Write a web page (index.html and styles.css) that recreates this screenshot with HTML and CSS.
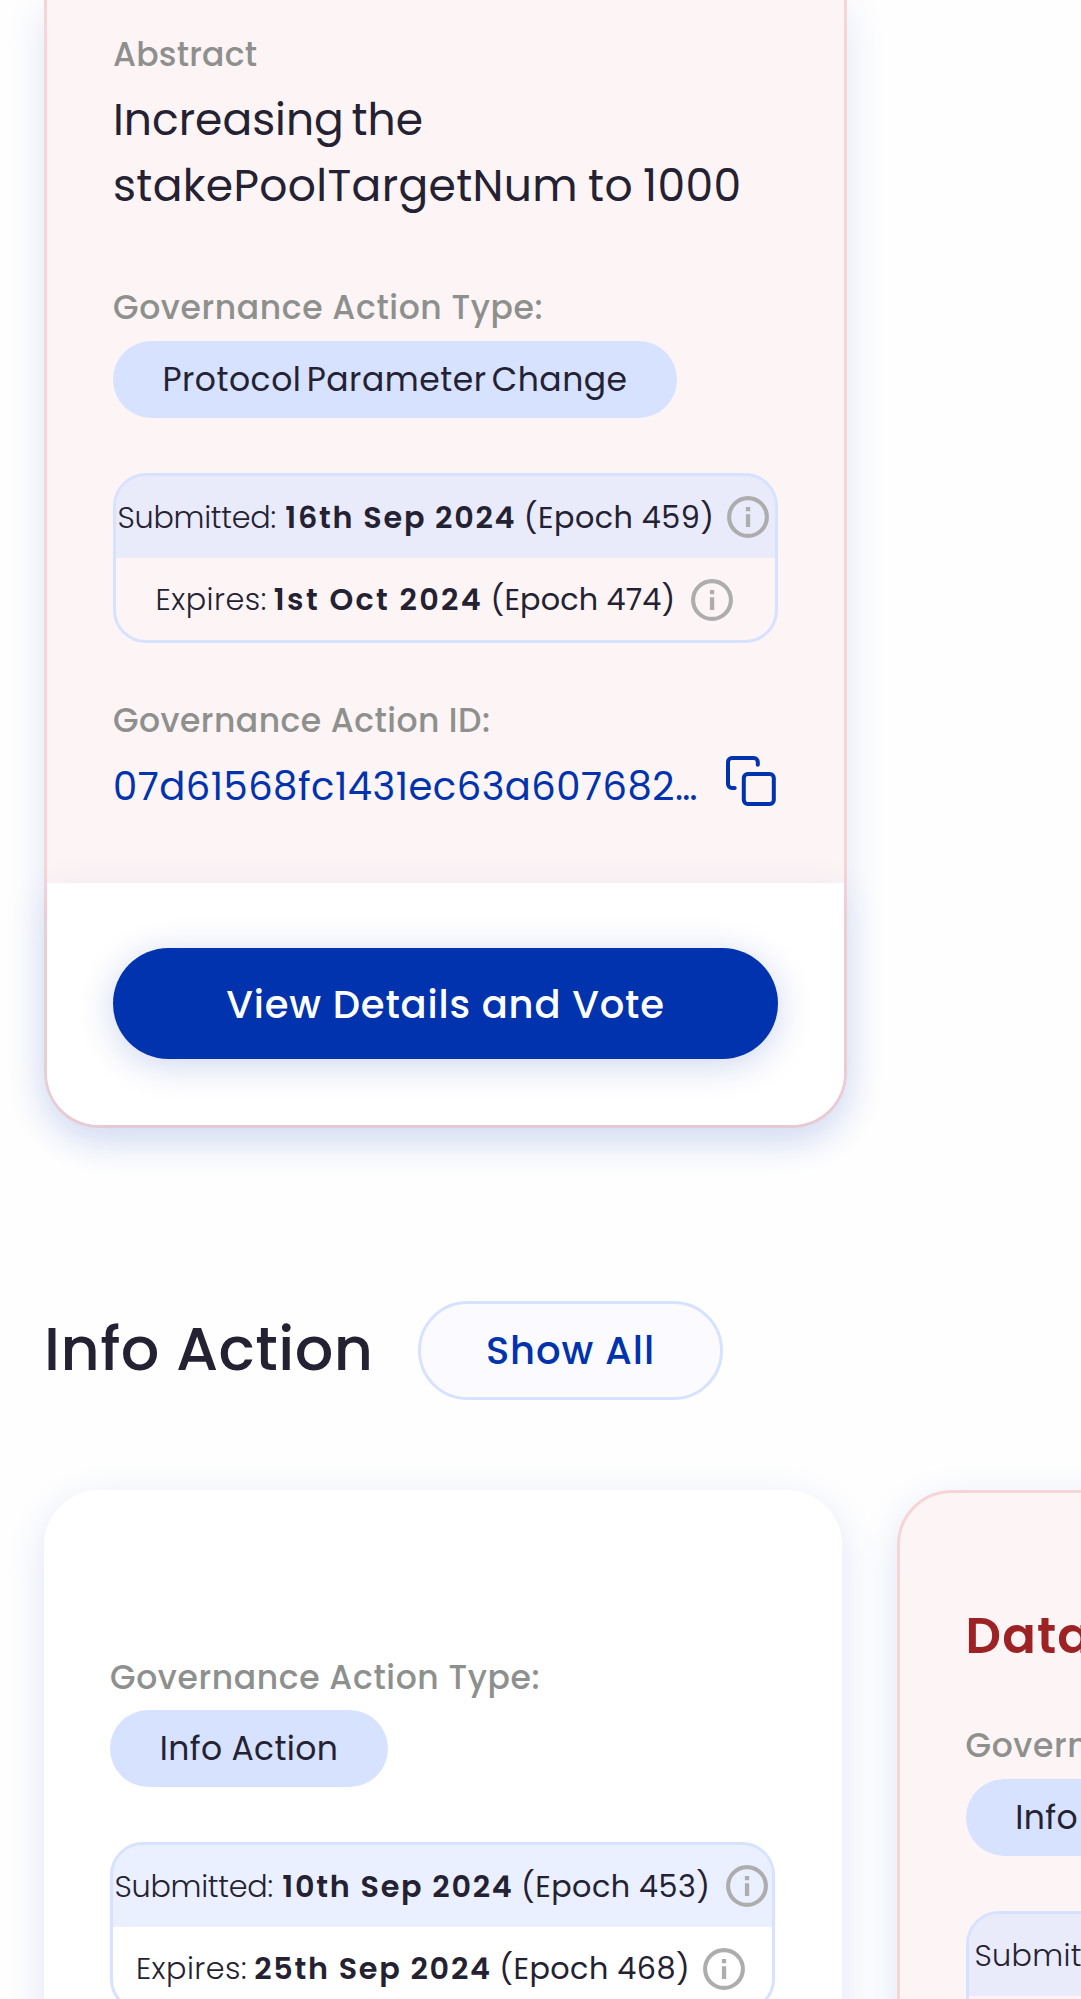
FILE: index.html
```
<!DOCTYPE html>
<html lang="en">
<head>
<meta charset="utf-8">
<title>Governance Actions</title>
<link rel="stylesheet" href="styles.css">
</head>
<body>
<svg class="defs" width="0" height="0" aria-hidden="true">
  <symbol id="info" viewBox="0 0 42 42">
    <circle cx="21" cy="21" r="18.9" fill="none" stroke="#adadad" stroke-width="4.1"/>
    <path d="M18.9 11h4.3v4.2h-4.3zM18.9 18.3h4.3v12.7h-4.3z" fill="#adadad"/>
  </symbol>
</svg>
<main class="page">
  <article class="card card--error card--first">
    <div class="card__body">
      <h4 class="label label--abstract">Abstract</h4>
      <p class="abstract">Increasing the stakePoolTargetNum to 1000</p>
      <h4 class="label">Governance Action Type:</h4>
      <span class="pill pill--long">Protocol Parameter Change</span>
      <div class="dates">
        <div class="dates__row dates__row--top">
          <span class="name">Submitted:</span><b class="date">16th Sep 2024</b><span class="epoch">(Epoch 459)</span>
          <svg class="info"><use href="#info"/></svg>
        </div>
        <div class="dates__row">
          <span class="name name--expires">Expires:</span><b class="date date--short">1st Oct 2024</b><span class="epoch epoch--tight">(Epoch 474)</span>
          <svg class="info info--spaced"><use href="#info"/></svg>
        </div>
      </div>
      <h4 class="label label--id">Governance Action ID:</h4>
      <div class="hash">
        <span class="hash__text">07d61568fc1431ec63a607682…</span>
        <svg class="copy" viewBox="0 0 50 50" fill="none" stroke="#0033ad" stroke-width="4" stroke-linecap="round" stroke-linejoin="round">
          <rect x="17.8" y="18" width="30" height="30" rx="4"/>
          <path d="M8.7 32H6a4 4 0 0 1-4-4V6a4 4 0 0 1 4-4h21.8a4 4 0 0 1 4 4v2.7"/>
        </svg>
      </div>
    </div>
    <footer class="card__footer">
      <button class="vote">View Details and Vote</button>
    </footer>
  </article>

  <header class="section">
    <h2 class="section__title">Info Action</h2>
    <button class="show-all">Show All</button>
  </header>

  <div class="slider">
    <article class="card card--plain">
      <h4 class="label">Governance Action Type:</h4>
      <span class="pill pill--info">Info Action</span>
      <div class="dates">
        <div class="dates__row dates__row--top">
          <span class="name">Submitted:</span><b class="date">10th Sep 2024</b><span class="epoch">(Epoch 453)</span>
          <svg class="info info--spaced"><use href="#info"/></svg>
        </div>
        <div class="dates__row">
          <span class="name name--expires">Expires:</span><b class="date date--near">25th Sep 2024</b><span class="epoch">(Epoch 468)</span>
          <svg class="info"><use href="#info"/></svg>
        </div>
      </div>
    </article>
    <article class="card card--error card--next">
      <h3 class="card__title">Data</h3>
      <h4 class="label">Governance Action Type:</h4>
      <span class="pill pill--info">Info Action</span>
      <div class="dates">
        <div class="dates__row dates__row--top dates__row--start">
          <span class="name name--open">Submitted:</span>
        </div>
        <div class="dates__row"></div>
      </div>
    </article>
  </div>
</main>
</body>
</html>
```
FILE: styles.css
```
* { box-sizing: border-box; margin: 0; padding: 0; }

body {
  width: 1081px;
  height: 1999px;
  overflow: hidden;
  background: #fefefe;
  color: #242232;
  font-family: Poppins, Inter, "Open Sans", sans-serif;
}

button { font: inherit; cursor: pointer; }
.defs { display: block; }
.page { height: 1999px; overflow: hidden; padding-left: 44px; }

.card {
  flex: none;
  border-radius: 55px;
  background: #fff;
  box-shadow: 0 11px 41px #dfe6f7;
}
.card--error { border: 3px solid #f6d5d5; background: #fdf4f5; }
.card--first { width: 803px; border-top: 0; border-radius: 0 0 55px 55px; }
.card__body { height: 883px; padding: 33px 66px 0; }
.card__footer {
  height: 242px;
  padding: 65.4px 66px 0;
  border-radius: 0 0 52px 52px;
  background: #fff;
  box-shadow: 0 11px 41px rgba(20, 60, 180, .11);
}

.label {
  color: #8e908e;
  font-size: 33px;
  font-weight: 500;
  line-height: 44px;
  letter-spacing: .62px;
  white-space: nowrap;
}
.label--abstract { margin-bottom: 10px; letter-spacing: .23px; }
.label--id { margin-top: 55.5px; letter-spacing: .47px; }
.abstract {
  margin-bottom: 66.5px;
  font-size: 44px;
  line-height: 66px;
  letter-spacing: .35px;
  word-spacing: -2px;
}
.abstract::first-line { letter-spacing: 0; word-spacing: -4px; }

.pill {
  display: flex;
  align-items: center;
  justify-content: center;
  width: 278px;
  height: 77px;
  margin-top: 11.5px;
  border-radius: 39px;
  background: #d6e2ff;
  font-size: 33px;
  letter-spacing: .35px;
  white-space: nowrap;
}
.pill--long { width: 564px; letter-spacing: .5px; word-spacing: -4px; }

.dates {
  width: 665px;
  height: 170px;
  margin-top: 55px;
  border: 3px solid #d6e2ff;
  border-radius: 33px;
  overflow: hidden;
}
.dates__row {
  display: flex;
  align-items: center;
  justify-content: center;
  height: 82px;
  padding-top: 1px;
  font-size: 30.25px;
  white-space: nowrap;
}
.dates__row--top { padding-top: 0; background: rgba(214, 226, 255, .5); }
.dates__row--start { justify-content: flex-start; padding-left: 6px; }
.name, .date, .epoch { padding-top: 1px; }
.name { font-weight: 300; letter-spacing: -.28px; }
.name--expires { letter-spacing: .5px; }
.name--open { letter-spacing: .3px; }
.date { margin-left: 9.5px; font-weight: 600; letter-spacing: 1.75px; }
.date--short { margin-left: 7px; letter-spacing: 2.3px; }
.date--near { margin-left: 7px; }
.epoch { margin-left: 7.5px; letter-spacing: .45px; }
.epoch--tight { letter-spacing: .16px; }
.info { flex: none; width: 42px; height: 42px; margin: 0 4px 0 13px; }
.info--spaced { margin: 0 2px 0 16px; }

.hash { display: flex; align-items: flex-start; justify-content: space-between; margin-top: 13.5px; padding-right: 2px; }
.hash__text { color: #0033ad; font-size: 38.5px; line-height: 61px; letter-spacing: .5px; }
.copy { width: 50px; height: 50px; }

.vote {
  width: 665px;
  height: 110.5px;
  padding-top: 2px;
  border: 0;
  border-radius: 56px;
  background: #0033ad;
  box-shadow: 0 6px 36px rgba(0, 51, 173, .2);
  color: #fff;
  font-size: 38.5px;
  font-weight: 500;
  letter-spacing: .82px;
}

.section { display: flex; align-items: center; height: 99px; margin-top: 173px; }
.section__title {
  width: 374px;
  padding-bottom: 5px;
  font-size: 60.5px;
  font-weight: 500;
  letter-spacing: .45px;
  white-space: nowrap;
}
.show-all {
  width: 305px;
  height: 99px;
  border: 3px solid #d6e2ff;
  border-radius: 50px;
  background: #fbfbff;
  color: #0033ad;
  font-size: 38.5px;
  font-weight: 500;
  letter-spacing: .92px;
}

.slider { display: flex; gap: 54.5px; height: 700px; margin-top: 90px; }
.card--plain { width: 798px; padding: 166px 66px 0; }
.card--plain .pill { margin-top: 10.3px; }
.card--next { width: 803px; padding: 110.3px 66px 0; }
.card__title {
  margin-bottom: 54.6px;
  color: #9c2224;
  font-size: 49.5px;
  font-weight: 600;
  line-height: 66px;
  letter-spacing: 1.2px;
}
```
